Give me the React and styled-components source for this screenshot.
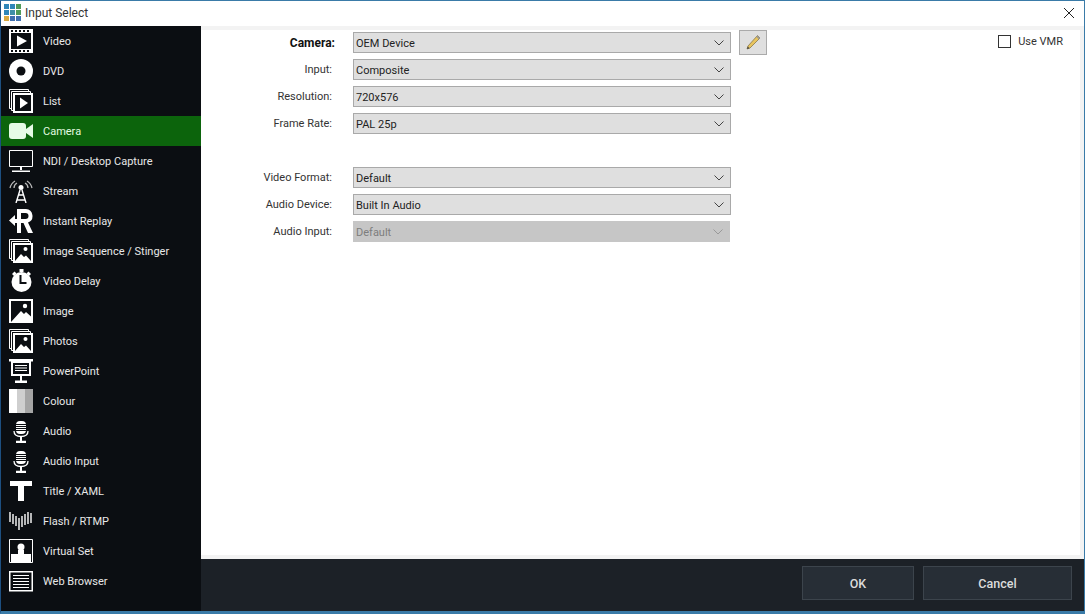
import React from "react";
import styled, { createGlobalStyle } from "styled-components";

const Global = createGlobalStyle`
  html, body { margin: 0; padding: 0; height: 100%; background: #fff; overflow: hidden; }
  #root { height: 100%; }
  * { box-sizing: border-box; }
`;
const FONT = `Roboto, "Noto Sans", "Liberation Sans", sans-serif`;

const Window = styled.div`
  width: 1085px; height: 614px; display: flex; flex-direction: column;
  border: 1px solid #3a7ba8; border-bottom-width: 3px; border-left-color: #1d4f80;
  font-family: ${FONT}; font-size: 11px; background: #fff; color: #222;
`;
const TitleBar = styled.div`
  height: 25px; display: flex; align-items: center; padding: 0 7px 1px 3px; gap: 3px; background: #fff; flex: none;
`;
const TitleText = styled.span` font-size: 12px; color: #333; flex: 1; `;
const Close = styled.button`
  border: 0; background: none; padding: 0; width: 16px; height: 16px; display: flex; margin-right: 0;
`;
const Body = styled.div` flex: 1; min-height: 0; display: flex; `;
const Sidebar = styled.nav` width: 200px; flex: none; background: #0b0e12; display: flex; flex-direction: column; `;
const Item = styled.div`
  height: 30px; display: flex; align-items: center; gap: 10px; padding-left: 8px;
  background: ${p => (p.$active ? "#0c640c" : "transparent")};
  color: ${p => (p.$active ? "#e2fbe2" : "#e8e8e8")};
  font-size: 11px;
`;
const IconBox = styled.svg` width: 24px; height: 24px; flex: none; display: block; `;
const Main = styled.div` flex: 1; min-width: 0; display: flex; flex-direction: column; `;
const Panel = styled.div` flex: 1; min-height: 0; background: #f3f3f3; padding: 4px 4px 4px 0; display: flex; `;
const Content = styled.div` flex: 1; background: #fff; display: flex; justify-content: space-between; `;
const Form = styled.div` display: flex; flex-direction: column; padding-top: 2px; `;
const Group = styled.div` display: flex; flex-direction: column; gap: 6px; margin-top: ${p => p.$gap || 0}px; `;
const Row = styled.div` display: flex; align-items: center; height: 21px; `;
const Label = styled.label`
  width: ${p => (p.$bold ? 134 : 131)}px; text-align: right; font-size: ${p => (p.$bold ? 12 : 11)}px; flex: none;
  margin-right: ${p => (p.$bold ? 18 : 21)}px;
  font-weight: ${p => (p.$bold ? 700 : 400)};
  color: ${p => (p.$bold ? "#111" : "#333")};
`;
const Select = styled.div`
  width: ${p => (p.$disabled ? 377 : 378)}px; height: 21px; display: flex; align-items: center; justify-content: space-between; padding: 1px 6px 0 2px;
  background: ${p => (p.$disabled ? "#c6c6c6" : "#dfdfdf")};
  border: 1px solid ${p => (p.$disabled ? "#c6c6c6" : "#a9a9a9")};
  color: ${p => (p.$disabled ? "#7d7d7d" : "#222")};
  font-size: 11px;
`;
const EditButton = styled.button`
  width: 28px; height: 25px; margin-left: 8px; padding: 0; background: #dfdfdf; border: 1px solid #aaa; display: flex; align-items: center; justify-content: center; flex: none;
`;
const Vmr = styled.label`
  display: flex; align-items: center; gap: 7px; height: 16px; margin: 3px 17px 0 0; font-size: 11px; color: #333;
`;
const Box = styled.span` width: 13px; height: 13px; border: 1px solid #333; background: #fff; display: block; `;
const Footer = styled.div` height: 52px; flex: none; background: #1c2127; display: flex; gap: 9px; padding: 7px 12px 0 601px; `;
const FootButton = styled.button`
  width: ${p => p.$w}px; height: 34px; background: #272e36; border: 1px solid #3c444c; color: #dcdcdc;
  font-family: ${FONT}; font-size: 12.5px; font-weight: 500; padding: 0;
`;

const W = "#fff";
const Video = () => (<IconBox viewBox="0 0 24 24">
  <path fill={W} d="M0 0h24v24H0z"/><path fill="#0b0e12" d="M2 4h20v16H2z"/>
  <path fill="#0b0e12" d="M2 1h2v2H2zM6 1h2v2H6zM10 1h2v2h-2zM14 1h2v2h-2zM18 1h2v2h-2zM2 21h2v2H2zM6 21h2v2H6zM10 21h2v2h-2zM14 21h2v2h-2zM18 21h2v2h-2z"/>
  <path fill={W} d="M8 6.500 18 12 8 17.500z"/></IconBox>);
const Dvd = () => (<IconBox viewBox="0 0 24 24"><circle cx="12" cy="12" r="12" fill={W}/><circle cx="12" cy="12" r="4.500" fill="#0b0e12"/></IconBox>);
const Stack = () => (<>
  <path fill="none" stroke={W} d="M.5.5h19v2M.5.5v19h2M2.500 2.500h19v2M2.500 2.500v19h2"/>
  <path fill={W} d="M4 4h20v20H4z"/><path fill="#0b0e12" d="M6 6h16v16H6z"/></>);
const List = () => (<IconBox viewBox="0 0 24 24"><Stack/><path fill={W} d="M11 8.500 19 14l-8 5.500z"/></IconBox>);
const Camera = () => (<IconBox viewBox="0 0 24 24"><rect x="0" y="4" width="17" height="16" rx="3" fill="#e6fbe6"/><path fill="#e6fbe6" d="m17 10 7-5v14l-7-5z"/></IconBox>);
const Desktop = () => (<IconBox viewBox="0 0 24 24"><path fill="none" stroke={W} d="M.5 1.500h23v16H.5z"/><path fill={W} d="M11 18h2v3h-2zM3 21.500h18V23H3z"/></IconBox>);
const Stream = () => (<IconBox viewBox="0 0 24 24">
  <g fill="none" stroke="#bbb" strokeWidth="1.3"><path d="M1 9a11 11 0 0 1 5-7M23 9a11 11 0 0 0-5-7M5 9a6 6 0 0 1 3-5M19 9a6 6 0 0 0-3-5"/></g>
  <circle cx="12" cy="8.500" r="2.500" fill={W}/><path fill="none" stroke={W} strokeWidth="1.400" d="M11 11 7 24M13 11l4 13M9 16h6M8 21h8"/></IconBox>);
const Replay = () => (<IconBox viewBox="0 0 24 24"><path fill={W} d="M8 0h9a7 7 0 0 1 2 13.500L24 24h-5l-4.500-10H12v10H8V14H6l0 3L0 11.500 6 6v4h2zM12 4v6h4.500a3 3 0 0 0 0-6z"/></IconBox>);
const Mountain = () => (<><circle cx="16.500" cy="10" r="2" fill={W}/><path fill={W} d="m6 22 6-7 3 3 2-1.500 5 5.500z"/></>);
const Sequence = () => (<IconBox viewBox="0 0 24 24"><Stack/><Mountain/></IconBox>);
const Delay = () => (<IconBox viewBox="0 0 24 24"><circle cx="12.500" cy="13" r="10" fill={W}/><path fill={W} d="M10.500 0h4v3h-4zM3 5l2.500-2.500 2 2-2.500 2.500zM22 5l-2.500-2.500-2 2 2.500 2.500z"/><path fill="none" stroke="#0b0e12" strokeWidth="2" d="M11.500 6v8h6"/></IconBox>);
const Picture = () => (<IconBox viewBox="0 0 24 24"><path fill={W} d="M0 0h24v24H0z"/><path fill="#0b0e12" d="M2 2h20v15.500l-5-4.500-2 2-3-3-10 11z"/><circle cx="16" cy="7" r="2.200" fill={W}/><path fill="#0b0e12" d="M2 17h1v5H2z"/></IconBox>);
const Point = () => (<IconBox viewBox="0 0 24 24"><path fill={W} d="M0 0h24v2.500H0zM2 2.500h20V17H2zM11 17h2v5h-2zM6 21.500h12V24H6z"/><path fill="#0b0e12" d="M4 4h16v11H4z"/><path fill={W} d="M6 6h12v1H6zM6 8.500h12v1H6zM6 11h12v1H6z"/></IconBox>);
const Colour = () => (<IconBox viewBox="0 0 24 24"><path fill="#fff" d="M0 0h8v24H0z"/><path fill="#cfcfcf" d="M8 0h8v24H8z"/><path fill="#a5a5a5" d="M16 0h8v24h-8z"/></IconBox>);
const Mic = () => (<IconBox viewBox="0 0 24 24"><rect x="7" y="2" width="10" height="13" rx="4" fill={W}/><path stroke="#0b0e12" d="M7 5.500h10M7 7.500h10M7 9.500h10M7 11.500h10"/><path fill="none" stroke={W} strokeWidth="1.300" d="M5 12c0 4 3 5.500 7 5.500s7-1.500 7-5.500"/><path fill={W} d="M11 17h2v5h-2zM7 21.800h10V24H7z"/></IconBox>);
const TitleI = () => (<IconBox viewBox="0 0 24 24"><path fill={W} d="M1 2h22v5h-8v15H9V7H1z"/></IconBox>);
const Flash = () => (<IconBox viewBox="0 0 24 24"><g stroke={W} strokeWidth="1.400"><path d="M1 3v10M4 5v10M7 7v10M10 9v12M13 7v11M16 5v11M19 3v12M22 4v10"/></g></IconBox>);
const VirtualSet = () => (<IconBox viewBox="0 0 24 24"><path fill="#0b0e12" stroke={W} d="M.5.5h23v23H.5z"/><circle cx="12" cy="8" r="3.500" fill={W}/><path fill={W} d="M9 11h6v4h7v8H2v-8h7z"/></IconBox>);
const Web = () => (<IconBox viewBox="0 0 24 24"><path fill="none" stroke={W} strokeWidth="1.500" d="M.75 2.750h22.500v19H.75z"/><path stroke={W} d="M4 6.500h16M4 9.500h16M4 12.500h16M4 15.500h16M4 18.500h16"/></IconBox>);

const items = [
  ["Video", Video], ["DVD", Dvd], ["List", List], ["Camera", Camera, true], ["NDI / Desktop Capture", Desktop],
  ["Stream", Stream], ["Instant Replay", Replay], ["Image Sequence / Stinger", Sequence], ["Video Delay", Delay],
  ["Image", Picture], ["Photos", Sequence], ["PowerPoint", Point], ["Colour", Colour], ["Audio", Mic],
  ["Audio Input", Mic], ["Title / XAML", TitleI], ["Flash / RTMP", Flash], ["Virtual Set", VirtualSet], ["Web Browser", Web],
];

const Chevron = ({ c }) => (<svg width="10" height="6" viewBox="0 0 10 6"><path d="M.5.5 5 5 9.500.5" fill="none" stroke={c} strokeWidth="1"/></svg>);
const Field = ({ label, value, bold, disabled, children }) => (
  <Row>
    <Label $bold={bold}>{label}</Label>
    <Select $disabled={disabled}><span>{value}</span><Chevron c={disabled ? "#999" : "#444"} /></Select>
    {children}
  </Row>
);
const Logo = () => (<svg width="18" height="18" viewBox="0 0 18 18" style={{ flex: "none" }}>
  {[["#2f86b8","#2f86b8","#4f9a58"],["#2f86b8","#3f8fa8","#4f9a58"],["#d9a83f","#3f6fb0","#3f6fb0"]].map((r, y) => r.map((c, x) => <rect key={x} x={x*6} y={y*6} width="5" height="5" fill={c}/>))}
</svg>);

export default function App() {
  return (
    <>
      <Global />
      <Window>
        <TitleBar>
          <Logo />
          <TitleText>Input Select</TitleText>
          <Close aria-label="Close"><svg width="16" height="16" viewBox="0 0 16 16"><path d="M3 3l10 10M13 3 3 13" stroke="#222" strokeWidth="1"/></svg></Close>
        </TitleBar>
        <Body>
          <Sidebar>
            {items.map(([t, I, a]) => <Item key={t} $active={a}><I /><span>{t}</span></Item>)}
          </Sidebar>
          <Main>
            <Panel>
              <Content>
                <Form>
                  <Group>
                    <Field label="Camera:" value="OEM Device" bold>
                      <EditButton aria-label="Edit">
                        <svg width="20" height="20" viewBox="0 0 20 20"><path d="M14.500 2.500 17 5 7 15l-3 1 1-3z" fill="#e8c45e" stroke="#8a7a4a" strokeWidth=".8"/><path d="M4 16l.8-2.500 1.700 1.700z" fill="#444"/><path d="m14.500 2.500 2.500 2.500-1.200 1.200-2.500-2.500z" fill="#999"/></svg>
                      </EditButton>
                    </Field>
                    <Field label="Input:" value="Composite" />
                    <Field label="Resolution:" value="720x576" />
                    <Field label="Frame Rate:" value="PAL 25p" />
                  </Group>
                  <Group $gap={33}>
                    <Field label="Video Format:" value="Default" />
                    <Field label="Audio Device:" value="Built In Audio" />
                    <Field label="Audio Input:" value="Default" disabled />
                  </Group>
                </Form>
                <Vmr><Box /><span>Use VMR</span></Vmr>
              </Content>
            </Panel>
            <Footer>
              <FootButton $w={112}>OK</FootButton>
              <FootButton $w={149}>Cancel</FootButton>
            </Footer>
          </Main>
        </Body>
      </Window>
    </>
  );
}
